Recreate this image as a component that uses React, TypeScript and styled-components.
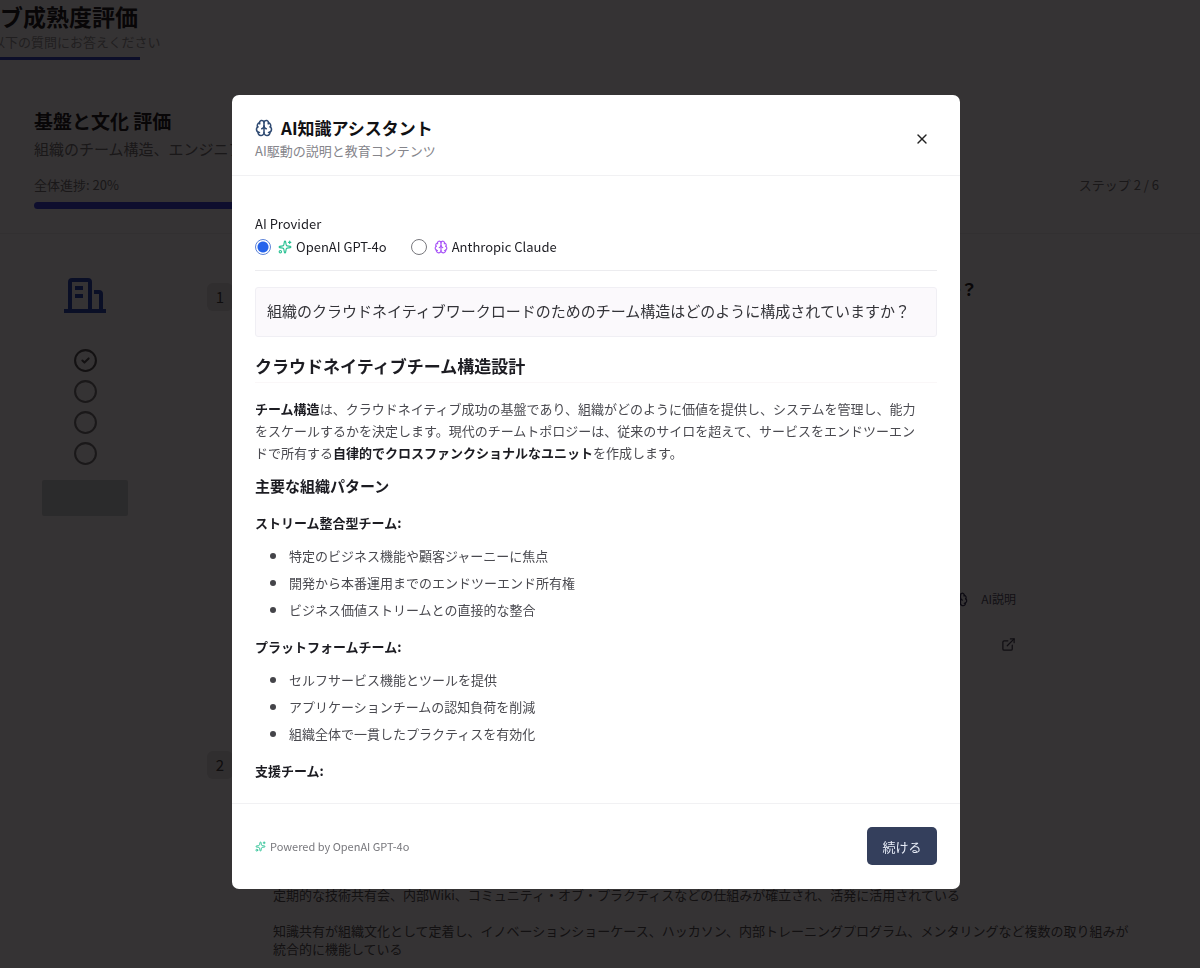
import React, { useState } from "react";
import styled, { createGlobalStyle } from "styled-components";
import { Brain, CircleCheck, Circle, ExternalLink, Sparkles, X } from "lucide-react";

const GlobalStyle = createGlobalStyle`
  *, *::before, *::after { box-sizing: border-box; }
  body {
    margin: 0;
    background: #fff;
    font-family: "Noto Sans CJK JP", "Noto Sans", sans-serif;
    font-size: 13px;
    color: #555;
  }
  h1, h2, h3, h4, p, ul, fieldset { margin: 0; padding: 0; border: 0; }
  button { font-family: inherit; cursor: pointer; }
`;

/* ---------- Assessment page ---------- */

const Page = styled.div`
  min-height: 100vh;
  overflow: hidden;
`;

const PageHeader = styled.header`
  padding-top: 2px;
`;

const PageTitle = styled.h1`
  font-size: 23px;
  line-height: 28px;
  font-weight: 700;
  color: #222;
`;

const PageSubtitle = styled.p`
  margin: 2px 0 0 -8px;
  line-height: 20px;
  color: #999;
`;

const TabIndicator = styled.div`
  width: 140px;
  height: 3px;
  margin-top: 5px;
  background: #3448c8;
`;

const Summary = styled.section`
  padding: 48px 41px 24px 34px;
  border-bottom: 1px solid #f0f0f0;
`;

const SummaryTitle = styled.h2`
  font-size: 19px;
  line-height: 26px;
  font-weight: 700;
  color: #222;
`;

const SummaryText = styled.p`
  margin-top: 4px;
  font-size: 15px;
  line-height: 22px;
  color: #777;
`;

const ProgressLabels = styled.div`
  display: flex;
  justify-content: space-between;
  margin-top: 15px;
  line-height: 20px;
  color: #777;
`;

const ProgressTrack = styled.div`
  height: 7px;
  margin-top: 7px;
  border-radius: 4px;
`;

const ProgressFill = styled.div`
  width: 20%;
  height: 100%;
  border-radius: 4px;
  background: #3c48e0;
`;

const Columns = styled.div`
  display: grid;
  grid-template-columns: 102px 1fr;
  gap: 71px;
  padding: 42px 41px 0 34px;
`;

const Steps = styled.aside`
  display: flex;
  flex-direction: column;
  align-items: center;
  padding-top: 2px;
  color: #777;
`;

const StepList = styled.div`
  display: flex;
  flex-direction: column;
  gap: 6px;
  margin: 34px 0 14px;
`;

const StepAction = styled.div`
  width: 86px;
  height: 36px;
  border-radius: 2px;
  background: #cdd6d6;
`;

const Question = styled.section`
  display: grid;
  grid-template-columns: 26px 1fr;
  gap: 16px;
`;

const QuestionNumber = styled.span`
  height: 28px;
  margin-top: 7px;
  border-radius: 6px;
  background: #e4e4e4;
  color: #444;
  font-size: 15px;
  line-height: 28px;
  text-align: center;
`;

const QuestionTitle = styled.h3`
  font-size: 17px;
  line-height: 26px;
  font-weight: 700;
  color: #222;
  white-space: nowrap;
`;

const Actions = styled.div`
  display: flex;
  flex-direction: column;
  align-items: flex-end;
  gap: 28px;
  padding: 287px 143px 92px 0;
`;

const GhostButton = styled.button`
  display: flex;
  align-items: center;
  gap: 13px;
  padding: 0;
  border: 0;
  background: none;
  color: #556;
  font-size: 12px;
  line-height: 20px;
`;

const Options = styled.div`
  display: grid;
  gap: 18px;
  padding: 142px 20px 0 24px;
  line-height: 18px;
`;

/* ---------- Dialog ---------- */

const Overlay = styled.div`
  position: fixed;
  inset: 0;
  display: flex;
  align-items: center;
  justify-content: center;
  padding: 16px 8px 0 0;
  background: rgba(2, 0, 1, 0.8);
`;

const Dialog = styled.div`
  display: flex;
  flex-direction: column;
  width: 100%;
  max-width: 728px;
  max-height: 90vh;
  border-radius: 7px;
  background: #fff;
  color: #1c1c22;
`;

const DialogHeader = styled.header`
  display: flex;
  justify-content: space-between;
  padding: 21px 23px 14px;
  border-bottom: 1px solid #f1f1f3;
`;

const DialogTitle = styled.h2`
  display: flex;
  align-items: center;
  gap: 8px;
  font-size: 17px;
  line-height: 24px;
  font-weight: 700;
  color: #111114;
`;

const DialogSubtitle = styled.p`
  margin-top: 1px;
  line-height: 20px;
  color: #85858b;
`;

const CloseButton = styled.button`
  display: flex;
  align-self: flex-start;
  margin-top: 7px;
  padding: 8px 7px;
  border: 0;
  background: none;
  color: #222;
`;

const DialogBody = styled.div`
  flex: 1;
  overflow: auto;
  padding: 37px 23px 21px;
`;

const ProviderGroup = styled.fieldset`
  min-width: 0;
  padding-bottom: 11px;
  border-bottom: 1px solid #ececef;
`;

const ProviderLegend = styled.legend`
  padding: 0;
  line-height: 22px;
`;

const ProviderRow = styled.div`
  display: flex;
  gap: 24px;
`;

const ProviderLabel = styled.label`
  display: flex;
  align-items: center;
  gap: 4px;
  line-height: 24px;
  cursor: pointer;
`;

const Radio = styled.input`
  appearance: none;
  width: 16px;
  height: 16px;
  margin: 0 3px 0 0;
  border: 1px solid #77777c;
  border-radius: 50%;
  background: #fff;

  &:checked {
    border-color: #5b82d8;
    background: radial-gradient(circle, #2563eb 0 5px, #fff 6px);
  }
`;

const Prompt = styled.p`
  margin-top: 16px;
  padding: 11px 12px 13px 11px;
  border: 1px solid #f0eff4;
  border-radius: 3px;
  background: #fbf9fc;
  color: #333338;
  font-size: 15px;
  line-height: 24px;
`;

const ArticleTitle = styled.h3`
  margin-top: 17px;
  padding-bottom: 4px;
  border-bottom: 1px solid #faf7f8;
  font-size: 17px;
  line-height: 24px;
  font-weight: 700;
`;

const Paragraph = styled.p`
  margin-top: 15px;
  padding-right: 12px;
  line-height: 22px;
  color: #4a4a50;

  strong { color: #1c1c22; }
`;

const SectionTitle = styled.h4`
  margin-top: 11px;
  font-size: 15px;
  line-height: 22px;
  font-weight: 700;
`;

const TeamLabel = styled.p`
  margin-top: 15px;
  line-height: 22px;
  font-weight: 700;
`;

const BulletList = styled.ul`
  display: grid;
  gap: 5px;
  margin-top: 11px;
  padding-left: 15px;
  list-style: none;
  line-height: 22px;
  color: #4a4a50;
`;

const Bullet = styled.li`
  display: flex;
  align-items: center;
  gap: 13px;

  &::before {
    content: "";
    width: 6px;
    height: 6px;
    border-radius: 50%;
    background: #444449;
  }
`;

const DialogFooter = styled.footer`
  display: flex;
  align-items: center;
  justify-content: space-between;
  padding: 23px 23px 24px;
  border-top: 1px solid #f1f1f3;
`;

const PoweredBy = styled.span`
  display: flex;
  align-items: center;
  gap: 4px;
  font-size: 11px;
  line-height: 20px;
  color: #77777c;
`;

const ContinueButton = styled.button`
  width: 70px;
  height: 38px;
  padding: 0;
  border: 0;
  border-radius: 5px;
  background: #343f5c;
  color: #e8edf8;
  font-size: 13px;
`;

const QUESTION =
  "組織のクラウドネイティブワークロードのためのチーム構造はどのように構成されていますか？";

const TEAMS = [
  {
    name: "ストリーム整合型チーム:",
    points: [
      "特定のビジネス機能や顧客ジャーニーに焦点",
      "開発から本番運用までのエンドツーエンド所有権",
      "ビジネス価値ストリームとの直接的な整合",
    ],
  },
  {
    name: "プラットフォームチーム:",
    points: [
      "セルフサービス機能とツールを提供",
      "アプリケーションチームの認知負荷を削減",
      "組織全体で一貫したプラクティスを有効化",
    ],
  },
];

const BuildingIcon = () => (
  <svg width="42" height="36" viewBox="0 0 42 36" fill="none" stroke="#2c4ab8" strokeWidth="4" aria-hidden="true">
    <path d="M0 33h42" />
    <path d="M6 33V4q0-2 2-2h16q2 0 2 2v29" />
    <path d="M30 14h5q2 0 2 2v17" />
    <path d="M11 10h8M11 18h8" />
  </svg>
);

const Assessment = () => (
  <Page>
    <PageHeader>
      <PageTitle>ブ成熟度評価</PageTitle>
      <PageSubtitle>以下の質問にお答えください</PageSubtitle>
      <TabIndicator />
    </PageHeader>
    <Summary>
      <SummaryTitle>基盤と文化 評価</SummaryTitle>
      <SummaryText>組織のチーム構造、エンジニア</SummaryText>
      <ProgressLabels>
        <span>全体進捗: 20%</span>
        <span>ステップ 2 / 6</span>
      </ProgressLabels>
      <ProgressTrack>
        <ProgressFill />
      </ProgressTrack>
    </Summary>
    <Columns>
      <Steps>
        <BuildingIcon />
        <StepList>
          <CircleCheck size={25} color="#555" />
          <Circle size={25} strokeWidth={2} />
          <Circle size={25} strokeWidth={2} />
          <Circle size={25} strokeWidth={2} />
        </StepList>
        <StepAction />
      </Steps>
      <main>
        <Question>
          <QuestionNumber>1</QuestionNumber>
          <div>
            <QuestionTitle>{QUESTION}</QuestionTitle>
            <Actions>
              <GhostButton type="button">
                <Brain size={15} color="#335" />
                AI説明
              </GhostButton>
              <GhostButton type="button" aria-label="リンクを開く">
                <ExternalLink size={15} color="#445" />
              </GhostButton>
            </Actions>
          </div>
        </Question>
        <Question>
          <QuestionNumber>2</QuestionNumber>
          <Options>
            <p>
              定期的な技術共有会、内部Wiki、コミュニティ・オブ・プラクティスなどの仕組みが確立され、活発に活用されている
            </p>
            <p>
              知識共有が組織文化として定着し、イノベーションショーケース、ハッカソン、内部トレーニングプログラム、メンタリングなど複数の取り組みが統合的に機能している
            </p>
          </Options>
        </Question>
      </main>
    </Columns>
  </Page>
);

export default function App() {
  const [provider, setProvider] = useState("openai");

  return (
    <>
      <GlobalStyle />
      <Assessment />
      <Overlay>
        <Dialog role="dialog" aria-modal="true" aria-labelledby="dialog-title">
          <DialogHeader>
            <div>
              <DialogTitle id="dialog-title">
                <Brain size={18} color="#2f4a72" />
                AI知識アシスタント
              </DialogTitle>
              <DialogSubtitle>AI駆動の説明と教育コンテンツ</DialogSubtitle>
            </div>
            <CloseButton type="button" aria-label="閉じる">
              <X size={16} />
            </CloseButton>
          </DialogHeader>
          <DialogBody>
            <ProviderGroup>
              <ProviderLegend>AI Provider</ProviderLegend>
              <ProviderRow>
                <ProviderLabel>
                  <Radio
                    type="radio"
                    name="provider"
                    checked={provider === "openai"}
                    onChange={() => setProvider("openai")}
                  />
                  <Sparkles size={14} color="#2cc295" />
                  OpenAI GPT-4o
                </ProviderLabel>
                <ProviderLabel>
                  <Radio
                    type="radio"
                    name="provider"
                    checked={provider === "anthropic"}
                    onChange={() => setProvider("anthropic")}
                  />
                  <Brain size={14} color="#a855f7" />
                  Anthropic Claude
                </ProviderLabel>
              </ProviderRow>
            </ProviderGroup>
            <Prompt>{QUESTION}</Prompt>
            <ArticleTitle>クラウドネイティブチーム構造設計</ArticleTitle>
            <Paragraph>
              <strong>チーム構造</strong>
              は、クラウドネイティブ成功の基盤であり、組織がどのように価値を提供し、システムを管理し、能力をスケールするかを決定します。現代のチームトポロジーは、従来のサイロを超えて、サービスをエンドツーエンドで所有する
              <strong>自律的でクロスファンクショナルなユニット</strong>
              を作成します。
            </Paragraph>
            <SectionTitle>主要な組織パターン</SectionTitle>
            {TEAMS.map((team) => (
              <React.Fragment key={team.name}>
                <TeamLabel>{team.name}</TeamLabel>
                <BulletList>
                  {team.points.map((point) => (
                    <Bullet key={point}>{point}</Bullet>
                  ))}
                </BulletList>
              </React.Fragment>
            ))}
            <TeamLabel>支援チーム:</TeamLabel>
          </DialogBody>
          <DialogFooter>
            <PoweredBy>
              <Sparkles size={11} color="#2cc295" />
              Powered by OpenAI GPT-4o
            </PoweredBy>
            <ContinueButton type="button">続ける</ContinueButton>
          </DialogFooter>
        </Dialog>
      </Overlay>
    </>
  );
}
